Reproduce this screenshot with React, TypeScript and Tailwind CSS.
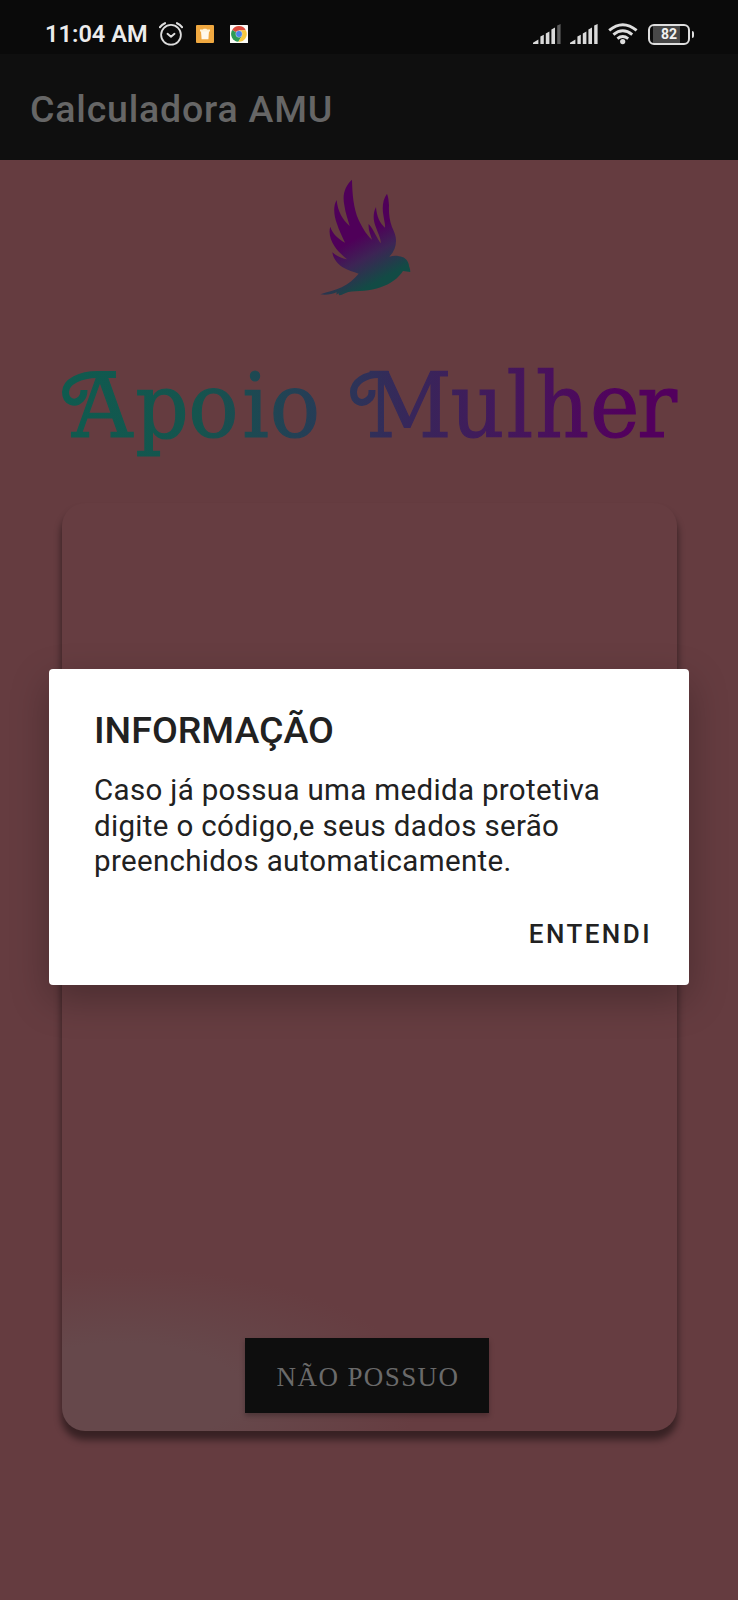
import React from "react";

function AlarmIcon() {
  return (
    <svg className="h-6 w-6" viewBox="0 0 24 24" fill="none" stroke="#dedede" strokeWidth="1.8" strokeLinecap="round">
      <circle cx="12" cy="12.8" r="9.9" />
      <path d="M8.5 11.8 12 14.8 15.5 11.8" strokeWidth="1.9" strokeLinejoin="round" />
      <path d="M1 5.2Q3 2.4 6 1.2M23 5.2Q21 2.4 18 1.2" strokeWidth="2.1" />
    </svg>
  );
}

function CleanerIcon() {
  return (
    <svg className="h-[18px] w-[18px]" viewBox="0 0 18 18">
      <rect width="18" height="18" rx="1" fill="#f0a840" />
      <path d="M5 6H13L12.4 14.2H5.6Z" fill="#fff9ec" />
      <path d="M4 4.6H7L7.6 3.8H10.4L11 4.6H14V6.4H4Z" fill="#fff3d8" />
    </svg>
  );
}

function ChromeIcon() {
  return (
    <svg className="h-[18px] w-[18px]" viewBox="0 0 18 18">
      <rect width="18" height="18" rx="0.5" fill="#fbfbf8" />
      <path d="M9 9 2.2 4.9A7.8 7.8 0 0 1 15.8 5.2L9 5.4Z" fill="#db4a3c" />
      <path d="M2.2 4.9A7.8 7.8 0 0 0 8.3 16.7L11.8 11.2 9 9Z" fill="#2d9c57" />
      <path d="M15.8 5.2A7.8 7.8 0 0 1 8.3 16.7L12 10.8 9 5.3Z" fill="#f6c83f" />
      <circle cx="9" cy="9" r="3.4" fill="#c9d4ea" />
      <circle cx="9" cy="9" r="2.9" fill="#4a83e8" />
    </svg>
  );
}

function SignalIcon({ last }: { last: string }) {
  return (
    <svg className="h-5 w-7" viewBox="0 0 28 20">
      <path d="M0 20V18.8L5.4 15.4V20ZM7.4 20V12.6L10.8 10.7V20ZM12.8 20V9.6L16.4 7.6V20ZM18.4 20V5.6L22 3.6V20Z" fill="#dadada" />
      <path d="M24.2 20V1.6L27.6 0V20Z" fill={last} />
    </svg>
  );
}

function WifiIcon() {
  return (
    <svg className="h-[22px] w-[30px]" viewBox="0 0 30 22" fill="none" stroke="#dedede" strokeWidth="2.9">
      <path d="M1.2 7.4Q14.7-4 28.6 7.4" />
      <path d="M5.4 11.7Q14.7 4 24.2 11.7" />
      <path d="M9.4 15.6Q14.7 11.5 20.2 15.6" />
      <circle cx="14.7" cy="18.6" r="2.6" fill="#dedede" stroke="none" />
    </svg>
  );
}

function Battery() {
  return (
    <div className="flex items-center gap-[2px]">
      <div className="flex h-[21px] w-[42px] items-center justify-center rounded-[6px] border-[2.5px] border-[#dedede] bg-[linear-gradient(90deg,#0b0b0b_3px,#484848_3px,#484848_30px,#0b0b0b_30px)] text-[14px] leading-none font-bold text-[#f2f2f2]">
        82
      </div>
      <div className="h-[7px] w-[2px] rounded-r bg-[#dedede]" />
    </div>
  );
}

function Bird() {
  return (
    <svg className="h-[145px] w-[130px]" viewBox="0 0 390 435">
      <defs>
        <linearGradient id="bird" gradientUnits="userSpaceOnUse" x1="172" y1="218" x2="242" y2="345">
          <stop offset="0" stopColor="#4f0059" />
          <stop offset="0.45" stopColor="#3d2455" />
          <stop offset="1" stopColor="#124b45" />
        </linearGradient>
      </defs>
      <path
        fill="url(#bird)"
        d="M156 44C136 62 126 88 133 121C136 145 144 164 149 183C128 165 113 139 110 105C99 122 101 151 111 177C117 196 126 214 135 233C114 221 98 207 91 185C85 201 91 225 103 243C114 260 127 270 141 283C124 280 108 272 97 262C99 279 111 296 128 307C143 317 160 320 176 326C163 342 146 356 125 367C106 376 83 381 61 388C78 392 97 387 110 382L109 389 116 385 117 391C126 391 134 384 145 381C172 378 212 379 242 367C274 356 296 338 309 318L331 321C331 310 327 307 326 297C322 283 311 275 297 274C286 271 277 273 268 275C284 259 291 237 287 216C285 204 280 195 276 186C268 164 266 140 267 121C266 106 265 95 261 86C248 103 246 128 250 150C252 166 256 176 255 188C239 174 230 153 228 126C219 143 219 164 226 182C232 200 242 218 243 235C231 222 222 194 206 177C204 195 211 207 216 224C196 206 187 187 176 165C160 128 157 86 156 44Z"
      />
    </svg>
  );
}

function Wordmark() {
  return (
    <svg className="h-[135px] w-[646px]" viewBox="46 345 646 135">
      <defs>
        <linearGradient id="word" gradientUnits="userSpaceOnUse" x1="62" y1="0" x2="677" y2="0">
          <stop offset="0" stopColor="#0f5b4f" />
          <stop offset="0.22" stopColor="#15544e" />
          <stop offset="0.42" stopColor="#263c57" />
          <stop offset="0.56" stopColor="#37275a" />
          <stop offset="0.78" stopColor="#48125c" />
          <stop offset="0.92" stopColor="#52005d" />
          <stop offset="1" stopColor="#52005d" />
        </linearGradient>
        <linearGradient id="wordScaled" gradientUnits="userSpaceOnUse" x1="66.7" y1="0" x2="728" y2="0">
          <stop offset="0" stopColor="#0f5b4f" />
          <stop offset="0.22" stopColor="#15544e" />
          <stop offset="0.42" stopColor="#263c57" />
          <stop offset="0.56" stopColor="#37275a" />
          <stop offset="0.78" stopColor="#48125c" />
          <stop offset="0.92" stopColor="#52005d" />
          <stop offset="1" stopColor="#52005d" />
        </linearGradient>
      </defs>
      <g transform="scale(0.93 1)" fill="url(#wordScaled)" stroke="url(#wordScaled)" strokeWidth="1.2" className="font-['DejaVu_Serif',serif] text-[90px]">
        <text y="437" x="77.5 145.5 202.5 260.5 290">Apoio</text>
        <text y="437" x="393.5 484.5 544.5 575.5 634.5 685">Mulher</text>
      </g>
      <g fill="none" stroke="url(#word)" strokeWidth="7" strokeLinecap="butt">
        <path d="M116 374.4H99C80 374 65.5 382 65.5 392C65.5 402 75 405 81 399C84 396 84 393 84 390" />
        <path d="M389 374.4H380C365 374 353.5 382 353.5 392C353.5 402 362 405 368 400C372 397 372 394 372 390" />
      </g>
    </svg>
  );
}

function Dialog() {
  return (
    <div className="absolute top-[669px] left-[49px] flex h-[316px] w-[640px] flex-col rounded-[4px] bg-white px-[45px] text-[#212121] shadow-[0_14px_38px_rgba(0,0,0,0.27)]">
      <h2 className="mt-[39px] h-11 text-[37.5px] leading-[44px] font-medium whitespace-nowrap">INFORMAÇÃO</h2>
      <p className="mt-[21px] text-[29.5px] leading-[35.6px] tracking-[0.33px] whitespace-nowrap">
        Caso já possua uma medida protetiva
        <br />
        digite o código,e seus dados serão
        <br />
        preenchidos automaticamente.
      </p>
      <button className="mt-[37px] -mr-2 self-end text-[26px] leading-[34px] font-medium tracking-[2.45px]">ENTENDI</button>
    </div>
  );
}

export default function App() {
  return (
    <div className="relative flex h-[1600px] w-[738px] flex-col overflow-hidden bg-[#653c40] font-['Roboto',sans-serif]">
      <div className="flex h-[54px] shrink-0 items-center bg-[#0a0a0a] pt-[14px] pr-[44px] pl-[45px]">
        <span className="w-[103px] text-[23.6px] leading-6 font-semibold whitespace-nowrap text-[#ececec]">11:04 AM</span>
        <div className="ml-[11px] flex items-center">
          <AlarmIcon />
          <div className="ml-[13px]"><CleanerIcon /></div>
          <div className="ml-4"><ChromeIcon /></div>
        </div>
        <div className="ml-auto flex items-center">
          <SignalIcon last="#5c5c5c" />
          <div className="ml-[9px]"><SignalIcon last="#dadada" /></div>
          <div className="ml-[10px]"><WifiIcon /></div>
          <div className="ml-[10px]"><Battery /></div>
        </div>
      </div>
      <header className="flex h-[106px] shrink-0 items-center bg-[#0f0f0f] pt-[3px] pl-[30px]">
        <h1 className="text-[37.5px] leading-[44px] font-medium tracking-[0.8px] whitespace-nowrap text-[#666666]">Calculadora AMU</h1>
      </header>
      <main className="flex flex-col items-center">
        <div className="mt-[5px] mr-2"><Bird /></div>
        <div className="mt-[35px]"><Wordmark /></div>
        <section className="mt-[23px] flex h-[928px] w-[615px] flex-col items-center justify-end rounded-[23px] bg-[#663d41] bg-[radial-gradient(ellipse_300px_125px_at_60px_890px,#66484b_40%,#663d41_100%)] pb-[18px] shadow-[0_8px_7px_1px_rgba(0,0,0,0.45)]">
          <button className="mr-[5px] h-[75px] w-[244px] bg-[#0e0e0e] pt-[3px] pl-[3px] font-['Liberation_Serif',serif] text-[27px] tracking-[1.4px] whitespace-nowrap text-[#6a6a6a] shadow-[0_3px_5px_rgba(0,0,0,0.25)]">
            NÃO POSSUO
          </button>
        </section>
      </main>
      <Dialog />
    </div>
  );
}
